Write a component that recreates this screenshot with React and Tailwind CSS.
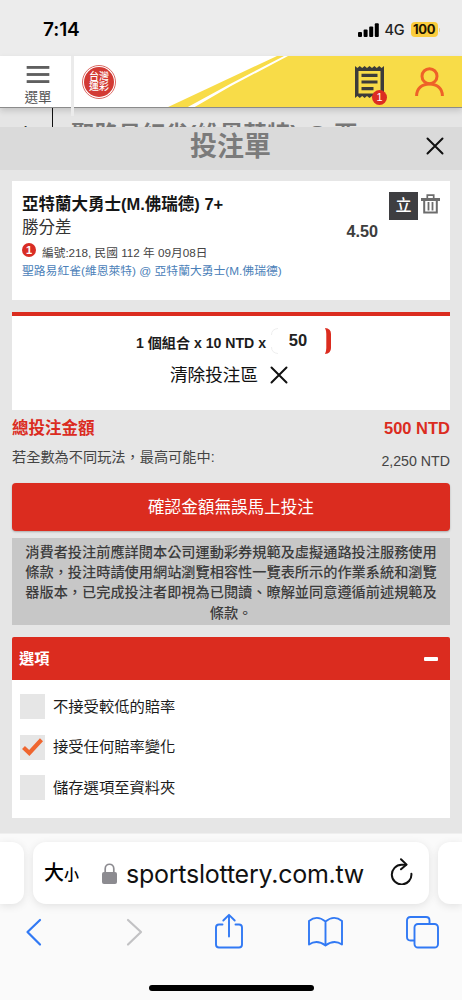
import React, { useState } from 'react';

const notice = [
  '消費者投注前應詳閱本公司運動彩券規範及虛擬通路投注服務使用',
  '條款，投注時請使用網站瀏覽相容性一覽表所示的作業系統和瀏覽',
  '器版本，已完成投注者即視為已閱讀、暸解並同意遵循前述規範及',
  '條款。',
];

const initialOptions = [
  { id: 'lower', label: '不接受較低的賠率', checked: false },
  { id: 'any', label: '接受任何賠率變化', checked: true },
  { id: 'save', label: '儲存選項至資料夾', checked: false },
];

const CloseIcon = ({ className }) => (
  <svg viewBox="0 0 18 18" className={className} fill="none" stroke="#111" strokeWidth="2">
    <path d="M1.5 1.5l15 15M16.5 1.5l-15 15" strokeLinecap="round" />
  </svg>
);

const StatusBar = () => (
  <div className="h-[56px] bg-[#ececec] flex items-start pt-[19px] pl-[43px] pr-[22px] font-['Inter']">
    <span className="text-[19px] leading-[22px] font-semibold text-black tracking-[-0.1px]">7:14</span>
    <div className="ml-auto flex items-center h-[21px]">
      <svg width="21" height="14" viewBox="0 0 21 14" fill="#000">
        <rect x="0" y="9" width="4" height="5" rx="1" />
        <rect x="5.6" y="6.5" width="4" height="7.5" rx="1" />
        <rect x="11.2" y="3.5" width="4" height="10.5" rx="1" />
        <rect x="16.8" y="0.3" width="4" height="13.7" rx="1" />
      </svg>
      <span className="ml-[6px] w-[20px] text-[14.5px] leading-[20px] font-medium tracking-[-0.3px] text-[#222]">4G</span>
      <span className="ml-[6px] w-[27px] h-[15px] rounded-[4px] bg-[#fbcd3d] text-[13px] leading-[15px] font-bold text-center tracking-[-0.3px] text-[#1d1600]">100</span>
      <span className="ml-px w-[1.5px] h-[4px] rounded-r bg-[#f3d47a]"></span>
    </div>
  </div>
);

const Header = () => (
  <div className="relative z-10 h-[52px] bg-white border-b border-[#8b8b8b] flex shadow-[0_3px_6px_rgba(0,0,0,0.14)]">
    <div className="w-[71px] pt-[10px] pl-[5px] flex flex-col items-center">
      <svg width="24" height="18" viewBox="0 0 24 18" fill="#5f5f5f">
        <rect y="0" width="24" height="3" />
        <rect y="7.5" width="24" height="3" />
        <rect y="15" width="24" height="3" />
      </svg>
      <span className="mt-[6px] text-[13.6px] leading-[18px] text-[#555]">選單</span>
    </div>
    <div className="w-[3px] h-[60px] bg-[#ebebeb] shrink-0"></div>
    <div className="ml-[8px] mt-[9px] w-[34px] h-[34px] shrink-0 rounded-full border border-[#dc6a64] p-px">
      <div className="w-full h-full rounded-full bg-[#d23a34] text-white font-medium text-[10px] leading-[10px] flex flex-col items-center justify-center">
        <span>台灣</span>
        <span>運彩</span>
      </div>
    </div>
    <div className="relative ml-auto w-[296px] h-[51px]">
      <svg className="absolute inset-0" width="296" height="51" viewBox="166 56 296 51">
        <path d="M166 108L277 56H462V108Z" fill="#f8dc48" />
        <path d="M186 108L231 83.5L284 56H288L231 86L193 108Z" fill="#fff" />
      </svg>
      <div className="relative h-full flex justify-end pr-[18px]">
        <div className="relative mt-[10px] w-[29px] h-[33px]">
          <svg width="29" height="33" viewBox="0 0 29 33">
            <path
              d="M0 0L2.4 2L4.8 0L7.2 2L9.6 0L12 2L14.5 0L17 2L19.4 0L21.8 2L24.2 0L26.6 2L29 0V32L26.6 30L24.2 32L21.8 30L19.4 32L17 30L14.5 32L12 30L9.6 32L7.2 30L4.8 32L2.4 30L0 32Z"
              fill="#3c3c3a"
            />
            <path d="M3.5 5H25.5V27.5H3.5Z" fill="#f8dc48" />
            <path d="M6.5 9.3H22.5M6.5 16H22.5M6.5 22.7H18.5" stroke="#3c3c3a" strokeWidth="3.2" />
          </svg>
          <span className="absolute left-[17px] top-[24px] w-[15px] h-[15px] rounded-full bg-[#dc2d22] text-white text-[11px] leading-[15px] text-center">1</span>
        </div>
        <svg className="ml-[31px] mt-[11px]" width="29" height="30" viewBox="0 0 29 30" fill="none" stroke="#ee6128" strokeWidth="3">
          <circle cx="14.5" cy="9.2" r="7.5" />
          <path d="M1.6 29C1.6 21.5 7 17 14.5 17S27.4 21.5 27.4 29" />
        </svg>
      </div>
    </div>
  </div>
);

const BetCard = () => (
  <div className="mt-[11px] h-[119px] bg-white px-[10px] pt-[12px] flex justify-between">
    <div className="w-[280px]">
      <div className="text-[16.5px] leading-[23px] font-bold text-[#161616]">亞特蘭大勇士(M.佛瑞德) 7+</div>
      <div className="text-[16.5px] leading-[22px] text-[#333]">勝分差</div>
      <div className="mt-[3px] flex items-center h-[22px]">
        <span className="-mt-[5px] w-[14px] h-[14px] rounded-full bg-[#d92d25] text-white text-[11px] leading-[14px] font-bold text-center">1</span>
        <span className="ml-[6px] mt-[2px] text-[11.7px] leading-[20px] text-[#444]">編號:218, 民國 112 年 09月08日</span>
      </div>
      <div className="text-[11.8px] leading-[16px] text-[#4a80b8] whitespace-nowrap">聖路易紅雀(維恩萊特) @ 亞特蘭大勇士(M.佛瑞德)</div>
    </div>
    <div className="flex">
      <span className="mt-[28px] text-[16.2px] leading-[20px] font-bold text-[#3d3d3d]">4.50</span>
      <span className="ml-[11px] -mt-px w-[29px] h-[28px] bg-[#3e3e41] text-white text-[16px] leading-[28px] font-medium text-center">立</span>
      <svg className="ml-[3px] mt-px" width="19" height="20" viewBox="0 0 19 20" fill="none" stroke="#6c6c6c">
        <path d="M0 5.5H19" strokeWidth="3" />
        <path d="M6.3 4V1.1H12.7V4" strokeWidth="1.7" />
        <path d="M3.2 5.5V18.6H15.8V5.5" strokeWidth="2" />
        <path d="M7.5 8V16.5M11.5 8V16.5" strokeWidth="1.8" />
      </svg>
    </div>
  </div>
);

const StakeCard = () => (
  <div className="mt-[12px] h-[98px] bg-white border-t-4 border-[#db2c1f]">
    <div className="mt-[12px] pl-[124px] flex h-[27px]">
      <span className="w-[131px] mt-[3px] text-[14.1px] leading-[24px] font-bold text-[#1c1c1c] whitespace-nowrap">1 個組合 x 10 NTD x</span>
      <span className="ml-[4px] w-[60px] h-[26px] flex justify-between">
        <svg width="8" height="26" viewBox="0 0 8 26" fill="none" stroke="#eeeeee">
          <path d="M7 .5Q.5 1 .5 7M.5 19Q.5 25 7 25.5" />
        </svg>
        <span className="text-[16.5px] leading-[25px] font-bold text-[#222]">50</span>
        <svg className="ml-[8px]" width="6" height="26" viewBox="0 0 6 26">
          <path d="M0 0Q6 .5 6 6V20Q6 25.5 0 26Q1.3 23.5 1.3 20V6Q1.3 2.5 0 0Z" fill="#db2c1f" />
        </svg>
      </span>
    </div>
    <div className="mt-[7px] pl-[158px] flex items-center h-[26px]">
      <span className="text-[17.6px] leading-[26px] text-[#111]">清除投注區</span>
      <CloseIcon className="ml-[12px] w-[18px] h-[18px]" />
    </div>
  </div>
);

const Options = () => {
  const [open, setOpen] = useState(true);
  const [options, setOptions] = useState(initialOptions);

  const toggle = (id) => {
    setOptions(options.map((o) => (o.id === id ? { ...o, checked: !o.checked } : o)));
  };

  return (
    <div className="mt-[12px]">
      <button
        onClick={() => setOpen(!open)}
        className="w-full h-[43px] rounded-t-[2px] bg-[#db2c1f] pl-[7px] pr-[12px] flex items-center justify-between"
      >
        <span className="pt-px text-[15.2px] leading-[24px] font-bold text-white">選項</span>
        <span className="w-[14px] h-[4px] rounded-[1px] bg-white"></span>
      </button>
      {open && (
        <div className="h-[138px] bg-white pt-[14px] pl-[8px] flex flex-col gap-[15px]">
          {options.map((option) => (
            <div key={option.id} onClick={() => toggle(option.id)} className="flex items-center h-[25.5px]">
              <span className="w-[25px] h-[25px] bg-[#e6e6e6] flex items-center justify-center">
                {option.checked && (
                  <svg width="21" height="18" viewBox="0 0 21 18" fill="none" stroke="#ef6630" strokeWidth="4.2">
                    <path d="M1.5 9.5L7.3 15L19.5 1.8" />
                  </svg>
                )}
              </span>
              <span className="ml-[8px] text-[15.3px] leading-[24px] text-[#1c1c1c]">{option.label}</span>
            </div>
          ))}
        </div>
      )}
    </div>
  );
};

const BrowserBar = () => (
  <div className="h-[167px] bg-[#fafafa] border-t border-[#efefef] overflow-hidden font-['Inter','Noto_Sans_CJK_TC',sans-serif]">
    <div className="mt-[8px] flex gap-[9px]">
      <div className="w-[24px] h-[62px] rounded-r-[12px] bg-white shadow-[0_2px_8px_rgba(0,0,0,0.1)]"></div>
      <div className="w-[396px] h-[62px] rounded-[13px] bg-white shadow-[0_2px_8px_rgba(0,0,0,0.1)] flex items-center pl-[11px] pr-[16px]">
        <span className="w-[37px] pt-[2px] whitespace-nowrap font-medium leading-[30px] text-black">
          <span className="text-[20px]">大</span>
          <span className="text-[15px]">小</span>
        </span>
        <svg className="ml-[21px]" width="15" height="21" viewBox="0 0 15 21">
          <path d="M3.2 10V5.8C3.2 -.3 11.8 -.3 11.8 5.8V10" fill="none" stroke="#8c8b90" strokeWidth="1.7" />
          <rect y="9" width="15" height="12" rx="2" fill="#8c8b90" />
        </svg>
        <span className="ml-[9px] pt-[2px] text-[25px] leading-[30px] tracking-[-0.24px] text-[#111] whitespace-nowrap">sportslottery.com.tw</span>
        <svg className="ml-auto -mt-[3px] shrink-0" width="23" height="27" viewBox="0 0 23 27" fill="none" stroke="#111" strokeWidth="2" strokeLinecap="round" strokeLinejoin="round">
          <path d="M16 6.8H11.5A9.8 9.8 0 1 0 21.4 15.8" />
          <path d="M11 1.2L16.6 6.6L11 11.3" />
        </svg>
      </div>
      <div className="w-[24px] h-[62px] rounded-l-[12px] bg-white shadow-[0_2px_8px_rgba(0,0,0,0.1)]"></div>
    </div>
    <div className="mt-[9px] pl-[16px] pr-[22px] flex justify-between">
      <svg width="36" height="36" viewBox="0 0 36 36" fill="none" stroke="#3179f4" strokeWidth="2.2" strokeLinecap="round" strokeLinejoin="round">
        <path d="M24 7L11.5 19L24 31.5" />
      </svg>
      <svg width="36" height="36" viewBox="0 0 36 36" fill="none" stroke="#c2c2c4" strokeWidth="2.2" strokeLinecap="round" strokeLinejoin="round">
        <path d="M15 7L28 19L15 31.5" />
      </svg>
      <svg width="36" height="36" viewBox="0 0 36 36" fill="none" stroke="#3179f4" strokeWidth="1.9" strokeLinecap="round" strokeLinejoin="round">
        <path d="M12.5 11.5H9Q6 11.5 6 14.5V31.5Q6 34.5 9 34.5H29Q32 34.5 32 31.5V14.5Q32 11.5 29 11.5H25.5" />
        <path d="M19 23.5V2M13.3 7.5L19 1.8L24.7 7.5" />
      </svg>
      <svg width="36" height="36" viewBox="0 0 36 36" fill="none" stroke="#3179f4" strokeWidth="1.9" strokeLinejoin="round">
        <path d="M18.5 8.5Q10 1.5 2 8V31.5Q10 26 18.5 32.5Q27 26 35 31.5V8Q27 1.5 18.5 8.5V32.5" />
      </svg>
      <svg width="36" height="36" viewBox="0 0 36 36" fill="none" stroke="#3179f4" strokeWidth="1.9">
        <path d="M10.5 27.5H6.5Q3 27.5 3 24V7.5Q3 4 6.5 4H22Q25.5 4 25.5 7.5V11" />
        <rect x="10.5" y="11" width="23.5" height="23.5" rx="3.5" />
      </svg>
    </div>
    <div className="mt-[36px] mx-auto w-[165px] h-[6px] rounded-full bg-black"></div>
  </div>
);

const App = () => {
  return (
    <div className="w-[462px] h-[1000px] overflow-hidden bg-[#e6e6e6] font-['Liberation_Sans','Noto_Sans_CJK_TC',sans-serif]">
      <StatusBar />
      <Header />
      {/* page content left visible above the slip */}
      <div className="h-[19px] overflow-hidden bg-[#e5e5e5] flex text-[#777]">
        <div className="w-[53px] h-full shrink-0 border-r border-[#111] pl-[20px] pt-[13px] text-[15px] leading-[20px] text-[#333]">4</div>
        <div className="pl-[18px] pt-[12px] text-[23.5px] leading-[30px] font-bold whitespace-nowrap">聖路易紅雀(維恩萊特) @ 亞</div>
      </div>
      <div className="h-[43px] bg-[#dadada] pl-[190px] pr-[18px] flex items-start justify-between">
        <span className="text-[27px] leading-[40px] font-bold text-[#7b7b7b]">投注單</span>
        <CloseIcon className="mt-[10px] w-[18px] h-[18px]" />
      </div>
      <div className="h-[663px] px-[12px] overflow-hidden">
        <BetCard />
        <StakeCard />
        <div className="h-[73px] pt-[5px]">
          <div className="flex justify-between text-[16.5px] leading-[27px] font-bold text-[#db2c1f]">
            <span>總投注金額</span>
            <span>500 NTD</span>
          </div>
          <div className="flex justify-between text-[14.2px] leading-[24px] text-[#444]">
            <span className="mt-[3px]">若全數為不同玩法，最高可能中:</span>
            <span className="mt-[7px]">2,250 NTD</span>
          </div>
        </div>
        <button className="w-full h-[48px] rounded-[4px] bg-[#db2c1f] text-white text-[16.6px] leading-[49px] shadow-[0_1px_2px_rgba(0,0,0,0.25)]">
          確認金額無誤馬上投注
        </button>
        <div className="mt-[7px] h-[87px] pt-[4px] bg-[#c7c7c7] text-[14.2px] leading-[20.2px] font-medium text-[#3c3c3c] text-center whitespace-nowrap">
          {notice.map((line) => (
            <div key={line}>{line}</div>
          ))}
        </div>
        <Options />
      </div>
      <BrowserBar />
    </div>
  );
};

export default App;
